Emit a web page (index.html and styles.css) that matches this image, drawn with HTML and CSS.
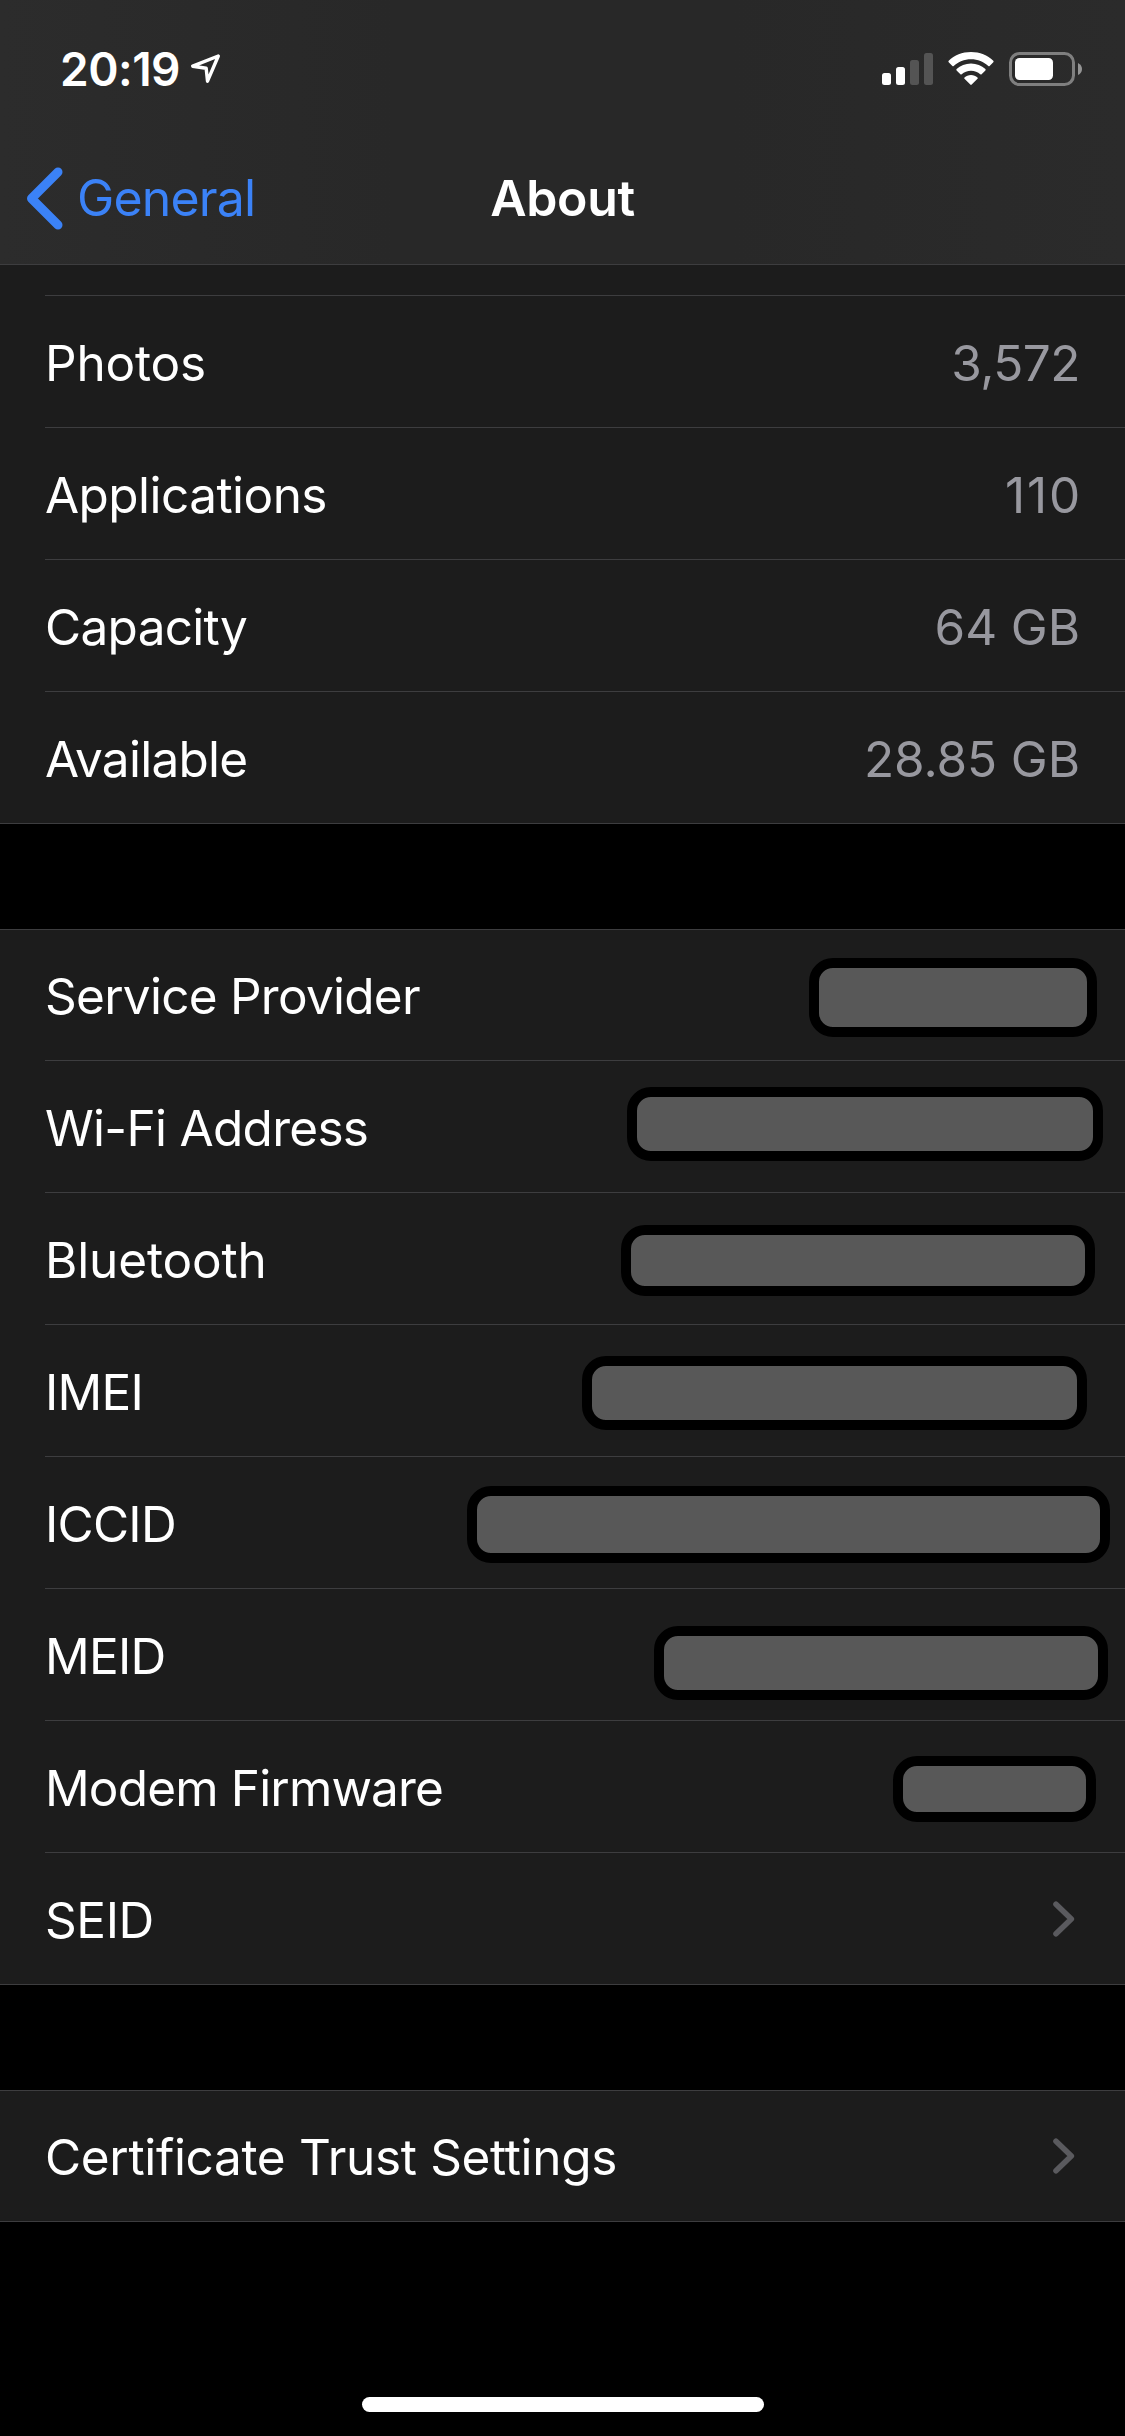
FILE: index.html
```html
<!DOCTYPE html>
<html lang="en">
<head>
<meta charset="utf-8">
<title>About</title>
<link rel="stylesheet" href="styles.css">
</head>
<body>
<div class="screen">
  <header class="header">
    <div class="status">
      <span class="time">20:19</span>
      <svg class="location" width="32" height="32" viewBox="0 0 32 32"><path d="M28.300 3 L2.700 13.200 L16.200 15.300 L17.500 28.200 Z" fill="none" stroke="#fff" stroke-width="3.400" stroke-linejoin="round"/></svg>
      <div class="indicators">
        <svg width="51" height="34" viewBox="0 0 51 34">
          <rect x="0" y="21" width="9" height="12" rx="2.500" fill="#fff"/>
          <rect x="14" y="15" width="9" height="18" rx="2.500" fill="#fff"/>
          <rect x="28" y="8" width="9" height="25" rx="2.500" fill="#545454"/>
          <rect x="42" y="1" width="9" height="32" rx="2.500" fill="#545454"/>
        </svg>
        <svg class="wifi" width="46" height="34" viewBox="0 0 46 34">
          <path d="M23 0 C31.800 0 39.600 3.400 45.300 8.700 Q46 9.500 45.300 10.300 L41.600 14 Q41 14.500 40.300 14 C35.800 9.800 29.700 7.300 23 7.300 C16.300 7.300 10.200 9.800 5.700 14 Q5 14.500 4.400 14 L0.700 10.300 Q0 9.500 0.700 8.700 C6.400 3.400 14.200 0 23 0 Z" fill="#fff"/>
          <path d="M23 11.500 C28.600 11.500 33.600 13.600 37.400 17.100 Q38 17.800 37.400 18.500 L33.600 22.200 Q33 22.700 32.300 22.200 C29.800 20 26.600 18.700 23 18.700 C19.400 18.700 16.200 20 13.700 22.200 Q13 22.700 12.400 22.200 L8.600 18.500 Q8 17.800 8.600 17.100 C12.400 13.600 17.400 11.500 23 11.500 Z" fill="#fff"/>
          <path d="M23 23 C25.500 23 27.800 23.900 29.500 25.400 Q30.200 26.100 29.500 26.800 L23.700 32.600 Q23 33.200 22.300 32.600 L16.500 26.800 Q15.800 26.100 16.500 25.400 C18.200 23.900 20.500 23 23 23 Z" fill="#fff"/>
        </svg>
        <svg class="battery" width="74" height="34" viewBox="0 0 74 34">
          <rect x="1.500" y="1.500" width="63" height="31" rx="9" fill="none" stroke="#7f7f7f" stroke-width="3"/>
          <rect x="6" y="6" width="38" height="22" rx="4.500" fill="#fff"/>
          <path d="M69 11 Q73 13 73 17 Q73 21 69 23 Z" fill="#949494"/>
        </svg>
      </div>
    </div>
    <nav class="nav">
      <div class="back">
        <svg width="37" height="63" viewBox="0 0 37 63"><path d="M32 5 L5.500 31.500 L32 58" fill="none" stroke="#3b82f7" stroke-width="9" stroke-linecap="round" stroke-linejoin="round"/></svg>
        <span class="back-label">General</span>
      </div>
      <h1 class="title">About</h1>
      <div></div>
    </nav>
  </header>

  <main>
    <section class="group group-first">
      <div class="row-end"></div>
      <div class="row"><span class="label photos">Photos</span><span class="value">3,572</span></div>
      <div class="row"><span class="label applications">Applications</span><span class="value value-apps">110</span></div>
      <div class="row"><span class="label capacity">Capacity</span><span class="value value-size">64 GB</span></div>
      <div class="row"><span class="label available">Available</span><span class="value value-size">28.85 GB</span></div>
    </section>

    <section class="group">
      <div class="row"><span class="label provider">Service Provider</span><span class="mask mask-provider"></span></div>
      <div class="row"><span class="label wifi-address">Wi-Fi Address</span><span class="mask mask-wifi"></span></div>
      <div class="row"><span class="label bluetooth">Bluetooth</span><span class="mask mask-bluetooth"></span></div>
      <div class="row"><span class="label imei">IMEI</span><span class="mask mask-imei"></span></div>
      <div class="row"><span class="label iccid">ICCID</span><span class="mask mask-iccid"></span></div>
      <div class="row"><span class="label meid">MEID</span><span class="mask mask-meid"></span></div>
      <div class="row"><span class="label modem">Modem Firmware</span><span class="mask mask-modem"></span></div>
      <div class="row"><span class="label seid">SEID</span><svg class="chevron" width="22" height="36" viewBox="0 0 22 36"><path d="M3 3.200 L18.300 18 L3 32.800" fill="none" stroke="#5a5a5e" stroke-width="5.600" stroke-linecap="round" stroke-linejoin="round"/></svg></div>
    </section>

    <section class="group">
      <div class="row"><span class="label certificate">Certificate Trust Settings</span><svg class="chevron" width="22" height="36" viewBox="0 0 22 36"><path d="M3 3.200 L18.300 18 L3 32.800" fill="none" stroke="#5a5a5e" stroke-width="5.600" stroke-linecap="round" stroke-linejoin="round"/></svg></div>
    </section>
  </main>

  <div class="home-bar"></div>
</div>
</body>
</html>
```
FILE: styles.css
```css
* { box-sizing: border-box; }

body {
  margin: 0;
  background: #000;
  color: #fff;
  font-family: Inter, "Liberation Sans", sans-serif;
}

.screen {
  display: flex;
  flex-direction: column;
  width: 1125px;
  height: 2436px;
  overflow: hidden;
  background: #000;
}

svg { display: block; flex: none; }

.header {
  height: 265px;
  flex: none;
  background: linear-gradient(90deg, #2c2c2c, #282828 35%, #282828 65%, #2b2b2b);
  border-bottom: 1px solid #3d3d3f;
}

.status {
  display: flex;
  height: 132px;
  padding: 52px 42px 0 60px;
}

.time {
  width: 122px;
  margin-top: -11px;
  font-size: 46px;
  font-weight: 600;
  line-height: 56px;
  letter-spacing: -0.5px;
  white-space: nowrap;
}

.location { margin: 1px 0 0 8px; }

.indicators { display: flex; margin-left: auto; }
.wifi { margin-left: 15px; }
.battery { margin-left: 15px; }

.nav {
  display: grid;
  grid-template-columns: 1fr auto 1fr;
  align-items: center;
  height: 132px;
}

.back {
  display: flex;
  align-items: center;
  padding-left: 26px;
  color: #3b82f7;
}

.back-label {
  margin-left: 14px;
  font-size: 50px;
  line-height: 60px;
  letter-spacing: -0.85px;
}

.title {
  margin: 0;
  font-size: 50px;
  font-weight: 600;
  line-height: 60px;
  letter-spacing: -0.4px;
}

.group {
  margin-bottom: 105px;
  padding-left: 46px;
  background: #1c1c1c;
  border-top: 1px solid #3d3d3f;
  border-bottom: 1px solid #3d3d3f;
}

.group-first { border-top: 0; }

.row-end {
  height: 31px;
  margin-left: -1px;
  border-bottom: 1px solid #3d3d3f;
}

.row {
  display: flex;
  align-items: flex-start;
  justify-content: space-between;
  height: 132px;
  margin-left: -1px;
  border-bottom: 1px solid #3d3d3f;
}

.row:first-child { height: 131px; }
.row:last-child { height: 131px; border-bottom: 0; }
.row:only-child { height: 130px; }

.label, .value {
  margin-top: 37px;
  font-size: 49.5px;
  line-height: 60px;
  letter-spacing: -0.5px;
  white-space: nowrap;
}

.row:first-child .label { margin-top: 36px; }

.photos { letter-spacing: -0.2px; }
.applications { letter-spacing: -0.55px; }
.capacity { letter-spacing: -0.7px; }
.available { letter-spacing: -0.75px; }
.provider { letter-spacing: -0.74px; }
.wifi-address { letter-spacing: -0.7px; }
.bluetooth { letter-spacing: -0.15px; }
.imei, .iccid, .meid { letter-spacing: -0.75px; }
.modem { letter-spacing: -0.84px; }
.seid { letter-spacing: -0.4px; }
.certificate { letter-spacing: -0.34px; }

.value { margin-right: 45px; color: #98989f; }
.value-apps { margin-right: 43px; letter-spacing: 1.8px; }
.value-size { letter-spacing: -0.1px; }

.chevron { margin: 48px 50px 0 0; }
.row:only-child .chevron { margin-top: 47px; }

.mask {
  flex: none;
  border: 10px solid #000;
  border-radius: 24px;
  background: #585858;
}

.mask-provider { width: 288px; height: 79px; margin: 28px 28px 0 0; }
.mask-wifi { width: 476px; height: 74px; margin: 26px 22px 0 0; }
.mask-bluetooth { width: 474px; height: 71px; margin: 32px 30px 0 0; }
.mask-imei { width: 505px; height: 74px; margin: 31px 38px 0 0; }
.mask-iccid { width: 643px; height: 77px; margin: 29px 15px 0 0; }
.mask-meid { width: 454px; height: 74px; margin: 37px 17px 0 0; }
.mask-modem { width: 203px; height: 66px; margin: 35px 29px 0 0; }

.home-bar {
  width: 402px;
  height: 15px;
  margin: auto auto 24px 362px;
  border-radius: 8px;
  background: #fff;
}
```
